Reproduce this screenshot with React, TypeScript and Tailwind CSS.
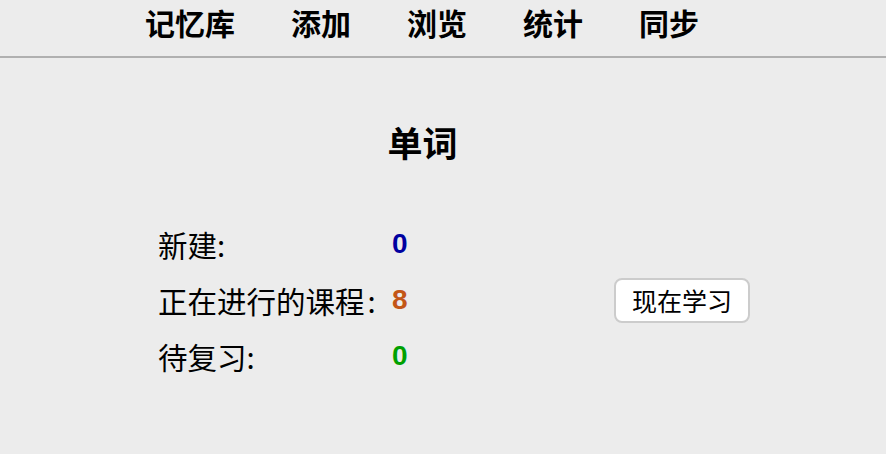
import React from "react";

const font = { fontFamily: '"Noto Sans CJK SC", "Noto Sans", sans-serif' };
const num = { fontFamily: '"Liberation Sans", sans-serif' };

export default function App() {
  const nav = ["记忆库", "添加", "浏览", "统计", "同步"];
  return (
    <div className="w-[886px] h-[454px] bg-[#ececec] overflow-hidden text-black" style={font}>
      <div className="h-[58px] border-b-2 border-[#b0b0b0] flex items-center pl-[145px] gap-[56px] pb-[13px]">
        {nav.map((n) => (
          <span key={n} className="text-[30px] font-bold leading-[30px]">{n}</span>
        ))}
      </div>
      <div className="w-[845px] flex justify-center pt-[64px]">
        <div className="text-[35px] font-bold leading-[40px]">单词</div>
      </div>
      <div className="pl-[158px] pt-[54px] flex flex-col">
        <div className="h-[56px] flex items-center">
          <span className="w-[234px] text-[29.5px] leading-[32px]">新建:</span>
          <span className="text-[28px] font-bold leading-[32px] text-[#0000a0]" style={num}>0</span>
        </div>
        <div className="h-[56px] flex items-center">
          <span className="w-[234px] text-[29.5px] leading-[32px] whitespace-nowrap">正在进行的课程<span className="ml-[3px]">:</span></span>
          <span className="w-[222px] text-[28px] font-bold leading-[32px] text-[#c35617]" style={num}>8</span>
          <button className="w-[136px] h-[45px] bg-white border-2 border-[#cccccc] rounded-[8px] text-[25px] leading-[28px] flex items-center justify-center">现在学习</button>
        </div>
        <div className="h-[56px] flex items-center">
          <span className="w-[234px] text-[29.5px] leading-[32px]">待复习:</span>
          <span className="text-[28px] font-bold leading-[32px] text-[#00a000]" style={num}>0</span>
        </div>
      </div>
    </div>
  );
}
